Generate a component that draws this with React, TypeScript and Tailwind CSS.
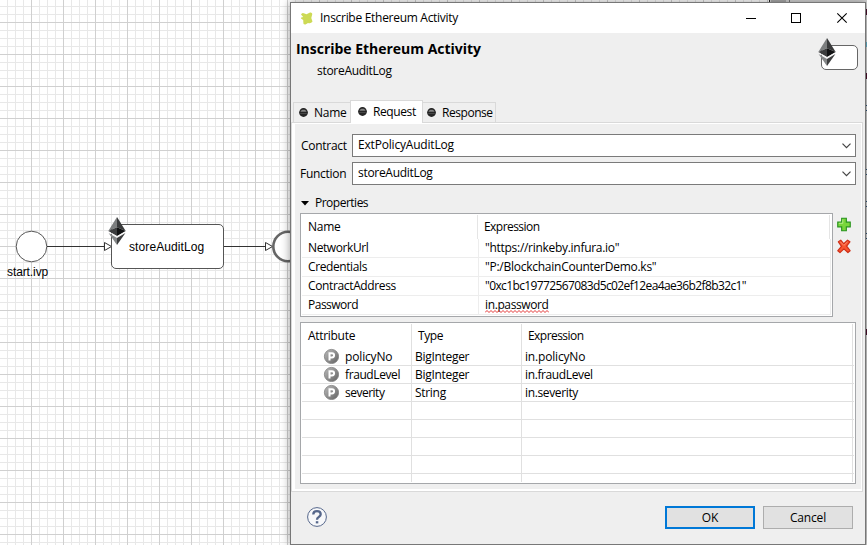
import React from "react";

function EthereumIcon({ className }: { className?: string }) {
  return (
    <svg viewBox="0 0 18 28" className={className} width="18" height="28">
      <path d="M9 0 L0.3 14 L9 10.2 Z" fill="#7d7f80" />
      <path d="M9 0 L17.7 14 L9 10.2 Z" fill="#3a3b3c" />
      <path d="M9 10.2 L0.3 14 L9 19 Z" fill="#3c3d3e" />
      <path d="M9 10.2 L17.7 14 L9 19 Z" fill="#111213" />
      <path d="M0.3 14.3 L9 19.3 L17.7 14.3 L9 22 Z" fill="#f4f4f4" />
      <path d="M0.6 16 L9 21 L9 28 Z" fill="#858788" />
      <path d="M17.4 16 L9 21 L9 28 Z" fill="#3c3d3e" />
    </svg>
  );
}

function Canvas() {
  return (
    <svg className="absolute inset-0" width="867" height="545">
      <defs>
        <pattern id="grid" width="32" height="32" patternUnits="userSpaceOnUse" x="-1" y="-10">
          <path d="M8.5 0V32M16.5 0V32M24.5 0V32M0 8.5H32M0 16.5H32M0 24.5H32" stroke="#e8e8e8" />
          <path d="M0.5 0V32M0 0.5H32" stroke="#d0d0d0" />
        </pattern>
      </defs>
      <rect width="867" height="545" fill="url(#grid)" />
      <g fill="#fff" stroke="#555">
        <circle cx="31.5" cy="246.5" r="15.3" />
        <path d="M47 246.5H104M224 246.5H265" stroke="#333" />
        <path d="M104.5 242.5L111.5 246.5L104.5 250.5Z" stroke="#333" />
        <path d="M265.5 242.5L272.5 246.5L265.5 250.5Z" stroke="#333" />
        <rect x="111.5" y="224.5" width="112" height="44" rx="4.5" />
        <circle cx="288" cy="246.5" r="14.7" stroke="#666" strokeWidth="2.6" />
      </g>
      {/* Palette and editor sliver that show past the dialog's edges */}
      <rect x="769" y="0" width="98" height="545" fill="#d4d4d4" />
      <rect x="769" y="0" width="1" height="2" fill="#222" />
      <rect x="771" y="0" width="15" height="2" fill="#aaa" />
      <rect x="789" y="0" width="1" height="2" fill="#777" />
      <g fill="#4a0d2c">
        <rect x="866" y="9" width="1" height="6" />
        <rect x="866" y="73" width="1" height="6" />
        <rect x="866" y="329" width="1" height="6" />
      </g>
      <rect x="866" y="42" width="1" height="5" fill="#62b5cf" />
      <path d="M866 105.5h1M866 110.5h1M866 169.5h1M866 174.5h1M866 201.5h1M866 206.5h1M866 233.5h1M866 238.5h1" stroke="#31577c" />
    </svg>
  );
}

function Dot() {
  return (
    <svg width="9" height="9" viewBox="0 0 9 9" className="shrink-0">
      <circle cx="4.5" cy="4.5" r="4.4" fill="#252525" />
      <path d="M1.5 3.7C2.1 1.2 6.9 1.2 7.5 3.7Z" fill="#858585" />
      <path d="M1.3 5.5H7.7" stroke="#505050" strokeWidth="0.8" />
    </svg>
  );
}

function ParamIcon() {
  return (
    <svg width="16" height="16" viewBox="0 0 16 16" className="-mt-px -ml-px shrink-0">
      <defs>
        <linearGradient id="ball" x1="0" y1="0" x2="1" y2="1">
          <stop offset="0" stopColor="#bdbdbd" />
          <stop offset="1" stopColor="#606060" />
        </linearGradient>
      </defs>
      <circle cx="8.5" cy="8.5" r="7.1" fill="url(#ball)" stroke="#7c7c7c" strokeWidth="0.8" />
      <path d="M6.5 12.6V5.2H9A2.1 2.1 0 0 1 9 9.4H6.5" fill="none" stroke="#fff" strokeWidth="2" />
    </svg>
  );
}

function Combo({ label, value, cls, valueCls }: { label: string; value: string; cls: string; valueCls: string }) {
  return (
    <div className="flex h-[23px] items-center">
      <span className={"w-[57px] " + cls}>{label}</span>
      <div className="flex h-[23px] w-[504px] items-center justify-between border border-[#7a7a7a] bg-white pr-1 pl-[5px]">
        <span className={"-mt-0.5 " + valueCls}>{value}</span>
        <svg width="9" height="6" viewBox="0 0 9 6" fill="none" stroke="#444" strokeWidth="1.2">
          <path d="M0.5 0.7L4.5 4.7L8.5 0.7" />
        </svg>
      </div>
    </div>
  );
}

const properties = [
  { name: "NetworkUrl", value: '"https://rinkeby.infura.io"', n: "tracking-[-0.4px]", v: "tracking-[-0.29px]" },
  { name: "Credentials", value: '"P:/BlockchainCounterDemo.ks"', n: "tracking-[-0.4px]", v: "tracking-[-0.26px]" },
  { name: "ContractAddress", value: '"0xc1bc19772567083d5c02ef12ea4ae36b2f8b32c1"', n: "tracking-[-0.36px]", v: "tracking-[-0.62px]" },
  { name: "Password", value: "in.password", n: "tracking-[-0.5px]", v: "tracking-[-0.38px]" },
];

const attributes = [
  { cells: ["policyNo", "BigInteger", "in.policyNo"], a: "tracking-[-0.15px]", b: "tracking-[-0.3px]", c: "tracking-[-0.18px]" },
  { cells: ["fraudLevel", "BigInteger", "in.fraudLevel"], a: "tracking-[-0.4px]", b: "tracking-[-0.3px]", c: "tracking-[-0.38px]" },
  { cells: ["severity", "String", "in.severity"], a: "tracking-[-0.5px]", b: "tracking-[-0.3px]", c: "tracking-[-0.36px]" },
  { cells: ["", "", ""], a: "", b: "", c: "" },
  { cells: ["", "", ""], a: "", b: "", c: "" },
  { cells: ["", "", ""], a: "", b: "", c: "" },
  { cells: ["", "", ""], a: "", b: "", c: "" },
];

function PropertiesTable() {
  return (
    <div className="h-[104px] w-[533px] border border-[#a5a7aa] bg-white px-px pt-px">
      <div className="flex h-[24px] items-center">
        <span className="flex h-full w-[176px] items-center border-r border-[#e5e5e5] pl-1.5 tracking-[-0.25px]">Name</span>
        <span className="flex h-full w-[352px] items-center border-r border-[#e5e5e5] pl-1.5 tracking-[-0.55px]">Expression</span>
      </div>
      {properties.map((p) => (
        <div key={p.name} className="flex h-[19px] w-[529px] border-b border-[#ededed] leading-[18px]">
          <span className={"w-[177px] border-r border-[#ededed] pl-1.5 " + p.n}>{p.name}</span>
          <span className={"flex w-[352px] border-r border-[#ededed] pl-1.5 " + p.v}>
            {p.name === "Password" ? (
              <span className="relative">
                {p.value}
                <svg className="absolute top-[14px] left-0" width="64" height="3" fill="none" stroke="#e02020">
                  <path d="M0 2.5l2 -2l2 2l2 -2l2 2l2 -2l2 2l2 -2l2 2l2 -2l2 2l2 -2l2 2l2 -2l2 2l2 -2l2 2l2 -2l2 2l2 -2l2 2l2 -2l2 2l2 -2l2 2l2 -2l2 2l2 -2l2 2l2 -2l2 2l2 -2l2 2" strokeWidth="0.9" />
                </svg>
              </span>
            ) : (
              p.value
            )}
          </span>
        </div>
      ))}
    </div>
  );
}

function AttributesTable() {
  return (
    <div className="h-[162px] w-[556px] border border-[#a5a7aa] bg-white p-px">
      <div className="flex h-[24px]">
        <span className="flex w-[110px] items-center border-r border-[#e0e0e0] pl-1.5 tracking-[-0.3px]">Attribute</span>
        <span className="flex w-[110px] items-center border-r border-[#e0e0e0] pl-1.5 tracking-[-0.4px]">Type</span>
        <span className="flex w-[331px] items-center border-r border-[#e0e0e0] pl-1.5 tracking-[-0.55px]">Expression</span>
      </div>
      {attributes.map((r, i) => (
        <div key={i} className="flex h-[18px] border-b border-[#e0e0e0] leading-[17px]">
          <span className="flex w-[110px] items-center border-r border-[#e0e0e0] pl-[22px]">
            {r.cells[0] && <ParamIcon />}
            <span className={"pl-1.5 " + r.a}>{r.cells[0]}</span>
          </span>
          <span className={"w-[110px] border-r border-[#e0e0e0] pl-[3px] " + r.b}>{r.cells[1]}</span>
          <span className={"w-[331px] border-r border-[#e0e0e0] pl-[3px] " + r.c}>{r.cells[2]}</span>
        </div>
      ))}
      <div className="flex h-[8px]">
        <span className="w-[110px] border-r border-[#e0e0e0]" />
        <span className="w-[110px] border-r border-[#e0e0e0]" />
        <span className="w-[331px] border-r border-[#e0e0e0]" />
      </div>
    </div>
  );
}

function Dialog() {
  return (
    <div className="absolute top-[2px] left-[290px] flex h-[543px] w-[576px] flex-col border border-[#777] bg-[#efefef] shadow-[0_0_9px_rgba(0,0,0,0.4)]">
      <div className="flex h-[30px] shrink-0 items-center bg-white pl-[9px]">
        <svg width="13" height="13" viewBox="0 0 13 13">
          <path d="M1 2.5Q2 0 4.5 1.5L6.5 2.2L10 .5Q12 0 12.3 2L11.3 6L12.5 9.5Q11 12 8 11L5.5 12.5Q3 13 3.3 10L3.2 8L1 6.5Q.5 5 3.2 5Z" fill="#cdda55" />
        </svg>
        <span className="pl-[7px] tracking-[-0.29px]">Inscribe Ethereum Activity</span>
        <svg className="ml-auto" width="119" height="12" fill="none" stroke="#000">
          <path d="M0 6.5H10" />
          <rect x="45.5" y="1.5" width="9" height="9" />
          <path d="M91.3 1.3L100.7 10.7M100.7 1.3L91.3 10.7" strokeWidth="1.1" />
        </svg>
      </div>
      <div className="flex h-[67px] shrink-0 justify-between">
        <div className="pl-[5px]">
          <div className="pt-[6px] text-[14px] leading-[19px] font-bold tracking-[-0.02px]">Inscribe Ethereum Activity</div>
          <div className="pt-[5px] pl-[21px] leading-[16px] tracking-[-0.29px]">storeAuditLog</div>
        </div>
        <div className="relative mt-3 mr-[7px] h-[25px] w-[37px] rounded-[5px] border border-[#666] bg-white">
          <EthereumIcon className="absolute -top-2 -left-1" />
        </div>
      </div>
      <div className="flex h-[22px] shrink-0 items-end pl-0.5">
        <div className="flex h-5 w-[57px] items-center gap-1.5 border-t border-l border-[#d9d9d9] pl-[5px] tracking-[-0.25px]">
          <Dot />
          <span>Name</span>
        </div>
        <div className="relative z-10 -mb-px flex h-[23px] w-[73px] items-center gap-1.5 border-x border-t border-[#d9d9d9] bg-white pb-px pl-[7px] tracking-[-0.4px]">
          <Dot />
          <span>Request</span>
        </div>
        <div className="flex h-5 w-[73px] items-center gap-1.5 border-t border-r border-[#d9d9d9] pl-1 tracking-[-0.45px]">
          <Dot />
          <span>Response</span>
        </div>
      </div>
      <div className="h-[370px] w-[572px] shrink-0 border border-[#d9d9d9] bg-white pt-px pr-px pb-0.5 pl-[3px]">
        <div className="h-full bg-[#efefef] pt-[10px]">
          <Combo label="Contract" value="ExtPolicyAuditLog" cls="pl-1.5 tracking-[-0.28px]" valueCls="tracking-[-0.19px]" />
          <div className="h-[5px]" />
          <Combo label="Function" value="storeAuditLog" cls="pl-[5px] tracking-[-0.28px]" valueCls="tracking-[-0.3px]" />
          <div className="flex h-[28px] items-center gap-1.5 pt-2 pl-1.5">
            <svg width="8" height="5">
              <path d="M0 0H8L4 4.5Z" />
            </svg>
            <span className="tracking-[-0.5px]">Properties</span>
          </div>
          <div className="flex gap-1 pl-[5px]">
            <PropertiesTable />
            <div className="flex flex-col gap-[7px] pt-1">
              <svg width="14" height="15" viewBox="0 0 15 15">
                <path d="M5 .8H10V5H14.2V10H10V14.2H5V10H.8V5H5Z" fill="#79d63c" stroke="#27931c" strokeWidth="1.2" />
                <path d="M6.2 2V6.2H2" fill="none" stroke="#b7ef8c" />
              </svg>
              <svg width="14" height="15" viewBox="0 0 15 15">
                <path d="M1.5 2.5L4 .8L7.3 4.6L11.3 .8L13.8 2.5L10.3 7.2L14 12L11.7 14L7.4 10L3.2 14L.9 12L4.8 7.3Z" fill="#f9552f" stroke="#cf3018" strokeWidth="1.3" strokeLinejoin="round" />
                <path d="M3.5 2.3L7.3 6.3L11.3 2.5" fill="none" stroke="#ff9271" />
              </svg>
            </div>
          </div>
          <div className="pt-[5px] pl-[5px]">
            <AttributesTable />
          </div>
        </div>
      </div>
      <div className="flex grow items-center pr-3 pb-px pl-4">
        <svg className="-mt-px" width="20" height="20" viewBox="0 0 20 20" fill="none" stroke="#56678b">
          <circle cx="10" cy="10" r="9.4" fill="#f7f8fa" strokeWidth="1" />
          <path d="M6.3 7.5Q6.3 4.2 10 4.2T13.7 7.3Q13.7 8.8 11.8 9.9T10 12.8" strokeWidth="2.3" />
          <path d="M8.8 15.3H11.3" strokeWidth="2.2" />
        </svg>
        <button className="ml-auto h-[23px] w-[90px] border-2 border-[#0078d7] bg-[#e1e1e1]">OK</button>
        <button className="ml-2 h-[23px] w-[90px] border border-[#adadad] bg-[#e1e1e1] tracking-[-0.15px]">Cancel</button>
      </div>
    </div>
  );
}

export default function App() {
  return (
    <div className="relative h-[545px] w-[867px] overflow-hidden bg-white font-['Open_Sans','Noto_Sans',sans-serif] text-[12px] leading-[16px] text-black">
      <Canvas />
      <EthereumIcon className="absolute top-[217px] left-[108px]" />
      <span className="absolute top-[239px] left-[129px] font-['Liberation_Sans',sans-serif] tracking-[0.1px]">storeAuditLog</span>
      <span className="absolute top-[264px] left-[7px] font-['Liberation_Sans',sans-serif] tracking-[-0.1px]">start.ivp</span>
      <Dialog />
    </div>
  );
}
